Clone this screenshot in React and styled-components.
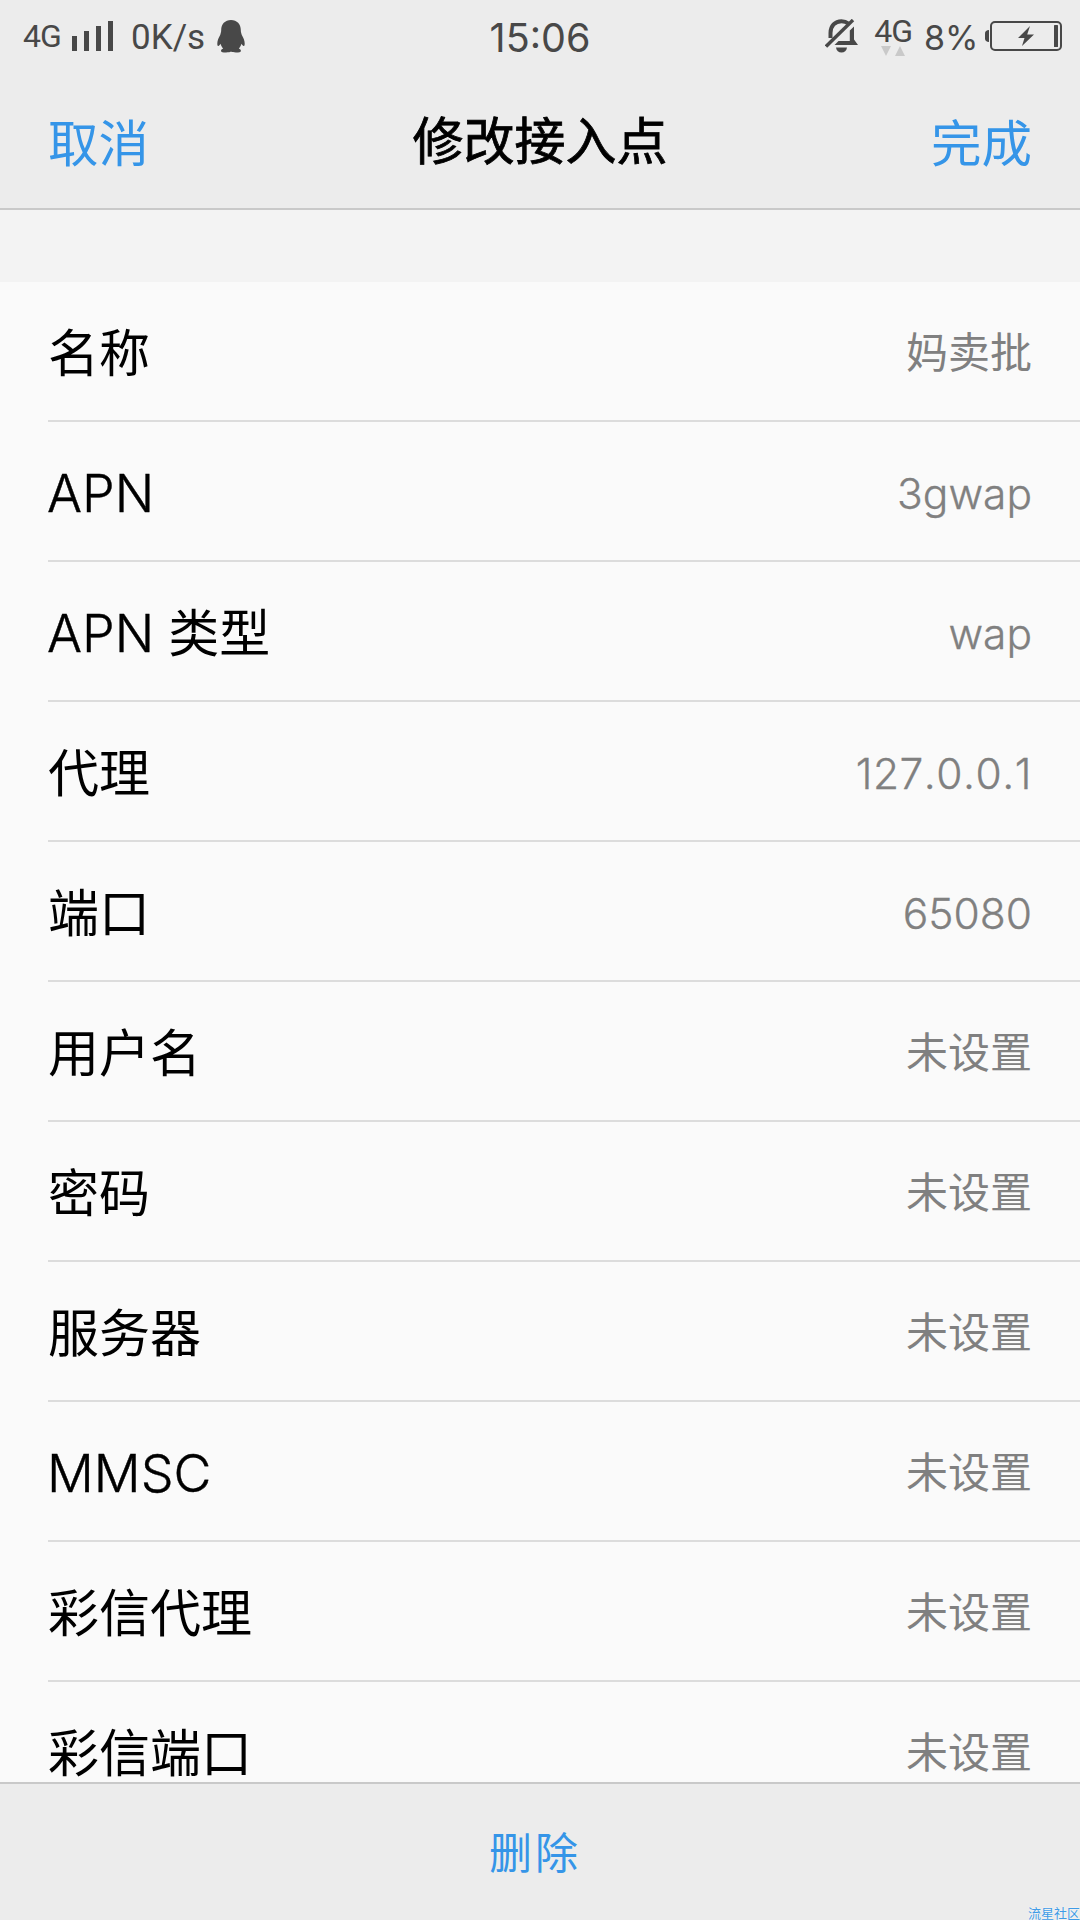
import React, { Component } from 'react';
import styled, { createGlobalStyle } from 'styled-components';

const settings = [
    { label: '名称', value: '妈卖批' },
    { latin: 'APN', value: '3gwap' },
    { latin: 'APN', label: '类型', value: 'wap' },
    { label: '代理', value: '127.0.0.1' },
    { label: '端口', value: '65080' },
    { label: '用户名', value: '' },
    { label: '密码', value: '' },
    { label: '服务器', value: '' },
    { latin: 'MMSC', value: '' },
    { label: '彩信代理', value: '' },
    { label: '彩信端口', value: '' },
]

const SignalBars = () => (
    <svg width="42" height="30" viewBox="0 0 42 30" fill="#484848">
        <rect x="0" y="15" width="5" height="15" />
        <rect x="12" y="10" width="5" height="20" />
        <rect x="24" y="5" width="5" height="25" />
        <rect x="36" y="0" width="5" height="30" />
    </svg>
)

const Penguin = () => (
    <svg width="28" height="33" viewBox="0 0 28 33" fill="#484848">
        <path d="M14 0C8 0 4.200 4.300 4.200 10C4.200 12 3.700 13.300 3.200 15C1.500 18 0.300 20.700 0.300 23.500C0.300 25.300 0.700 26.200 1.300 26C2 25.800 2.900 24.800 3.500 23.800C4 25.700 4.900 27.200 6.200 28.600C4.800 29.200 3.900 30 4 31C4.100 32.300 6 32.500 9 32.500C11.500 32.500 13 32.200 14 31.600C15 32.200 16.500 32.500 19 32.500C22 32.500 23.800 32.300 23.900 31C24 30 23.200 29.200 21.800 28.600C23.100 27.200 24 25.700 24.500 23.800C25.100 24.800 26 25.800 26.700 26C27.300 26.200 27.700 25.300 27.700 23.500C27.700 20.700 26.500 18 24.800 15C24.300 13.300 23.800 12 23.800 10C23.800 4.300 20 0 14 0Z" />
    </svg>
)

const BellOff = () => (
    <svg width="34" height="34" viewBox="0 0 34 34">
        <path d="M5.500 19V14C5.500 7 10 2.200 16.500 2.200C19.500 2.200 21.800 3.200 23.500 4.500" fill="none" stroke="#484848" strokeWidth="4" />
        <path d="M29 7.500V20.500L33 26H9.500L13.500 22H24.800V11.500Z" fill="#484848" />
        <path d="M11 28.500H22C21.500 31.800 19.500 33.500 16.500 33.500C13.500 33.500 11.500 31.800 11 28.500Z" fill="#484848" />
        <path d="M1 27.500L28 1" stroke="#484848" strokeWidth="3.400" />
    </svg>
)

const DataArrows = () => (
    <svg width="24" height="10" viewBox="0 0 24 10" fill="#c9c9c9">
        <path d="M0 0H10L5 10Z" />
        <path d="M14 10H24L19 0Z" />
    </svg>
)

const Battery = () => (
    <svg width="77" height="30" viewBox="0 0 77 30">
        <path d="M4 9V21C1.500 21 0 19.500 0 17.500V12.500C0 10.500 1.500 9 4 9Z" fill="#484848" />
        <rect x="6" y="1" width="70" height="28" rx="4" fill="none" stroke="#484848" strokeWidth="2" />
        <rect x="69" y="4" width="4" height="22" rx="0.500" fill="#484848" />
        <path d="M45 5L33 17H39.500L37 25L49 13.500H42.200Z" fill="#484848" />
    </svg>
)

const renderValue = value => {
    if (/^[\d.]+\.\d+$/.test(value)) return <Address>{value}</Address>
    if (/^\w+$/.test(value)) return <LatinValue>{value}</LatinValue>
    return <Value>{value || '未设置'}</Value>
}

export default class App extends Component {
    render() {
        return (
            <Screen>
                <GlobalStyle />
                <StatusBar>
                    <StatusSide>
                        <Carrier>4G</Carrier>
                        <SignalBars />
                        <Speed>0K/s</Speed>
                        <Penguin />
                    </StatusSide>
                    <Clock>15:06</Clock>
                    <StatusSide $end>
                        <BellOff />
                        <Network>
                            <NetworkType>4G</NetworkType>
                            <DataArrows />
                        </Network>
                        <Percent>8%</Percent>
                        <Battery />
                    </StatusSide>
                </StatusBar>
                <TitleBar>
                    <BarButton>取消</BarButton>
                    <Title>修改接入点</Title>
                    <BarButton>完成</BarButton>
                </TitleBar>
                <List>
                    {settings.map((item, i) => (
                        <Row key={i}>
                            <Label>
                                {item.latin && <Latin>{item.latin}</Latin>}
                                {item.label}
                            </Label>
                            {renderValue(item.value)}
                        </Row>
                    ))}
                </List>
                <BottomBar>
                    <DeleteButton>删除</DeleteButton>
                </BottomBar>
                <Watermark>流星社区</Watermark>
            </Screen>
        )
    }
}

const GlobalStyle = createGlobalStyle`
body {
    margin: 0;
    background: #f3f3f3;
}
button {
    padding: 0;
    border: 0;
    background: none;
    font-family: inherit;
}
`

const Screen = styled.div`
position: relative;
display: flex;
flex-direction: column;
width: 1080px;
height: 1920px;
overflow: hidden;
background: #f3f3f3;
font-family: Inter, "Noto Sans CJK SC", sans-serif;
font-weight: 400;
`

const StatusBar = styled.div`
display: grid;
grid-template-columns: 1fr 106px 1fr;
align-items: start;
height: 72px;
flex: none;
padding: 0 18px 0 18px;
background: #ececec;
color: #484848;
`

const StatusSide = styled.div`
display: flex;
align-items: center;
justify-content: ${p => p.$end ? 'flex-end' : 'flex-start'};
height: 72px;
padding-left: ${p => p.$end ? '0' : '5px'};
svg {
    flex: none;
}
`

const StatusText = styled.span`
flex: none;
font-family: Roboto, sans-serif;
font-size: 32px;
line-height: 36px;
white-space: nowrap;
`

const Carrier = styled(StatusText)`
width: 49px;
letter-spacing: -1px;
`

const Speed = styled(StatusText)`
width: 86px;
margin-left: 17px;
padding-top: 4px;
font-size: 35px;
`

const NetworkType = styled(StatusText)`
line-height: 24px;
letter-spacing: -1px;
margin-bottom: 3px;
`

const Percent = styled(StatusText)`
width: 61px;
padding-top: 3px;
font-family: Inter, sans-serif;
font-size: 34px;
`

const Clock = styled.div`
font-size: 39.500px;
line-height: 76px;
text-align: center;
`

const Network = styled.div`
display: flex;
flex-direction: column;
align-items: center;
margin: 2px 12px 0 15px;
`

const TitleBar = styled.header`
display: flex;
align-items: center;
justify-content: space-between;
box-sizing: border-box;
flex: none;
height: 138px;
padding: 0 48px;
background: #ececec;
border-bottom: 2px solid #c9c9c9;
`

const BarButton = styled.button`
padding-top: 8px;
color: #3595e8;
font-size: 50.500px;
line-height: 72px;
`

const Title = styled.h1`
margin: 0;
padding-top: 4px;
color: #000;
font-size: 51px;
font-weight: 400;
line-height: 72px;
-webkit-text-stroke: 0.800px #000;
`

const List = styled.main`
flex: 1;
min-height: 0;
overflow: hidden;
margin-top: 72px;
padding-left: 48px;
background: #fafafa;
`

const Row = styled.div`
display: flex;
align-items: center;
justify-content: space-between;
box-sizing: border-box;
height: 140px;
padding-right: 48px;
border-bottom: 2px solid #dcdcdc;
`

const Label = styled.span`
display: flex;
align-items: center;
gap: 14px;
color: #000;
font-size: 51px;
line-height: 52px;
padding-top: 5px;
`

const Latin = styled.span`
font-size: 52px;
font-weight: 300;
margin-left: -1px;
-webkit-text-stroke: 0.400px #000;
`

const Value = styled.span`
color: #808080;
font-size: 42px;
line-height: 52px;
padding-top: 4px;
`

const LatinValue = styled(Value)`
font-size: 42.500px;
font-weight: 300;
padding-top: 6px;
-webkit-text-stroke: 0.300px #808080;
`

const Address = styled(LatinValue)`
font-kerning: none;
letter-spacing: 0.500px;
`

const BottomBar = styled.footer`
display: flex;
align-items: center;
justify-content: center;
box-sizing: border-box;
flex: none;
height: 138px;
padding: 0 10px 4px 0;
background: #ececec;
border-top: 2px solid #c9c9c9;
`

const DeleteButton = styled.button`
color: #3595e8;
font-size: 43px;
letter-spacing: 3px;
`

const Watermark = styled.span`
position: absolute;
right: 0;
bottom: 0;
color: #3f9be6;
font-size: 13px;
line-height: 13px;
text-shadow: 0 0 2px #fff;
`
